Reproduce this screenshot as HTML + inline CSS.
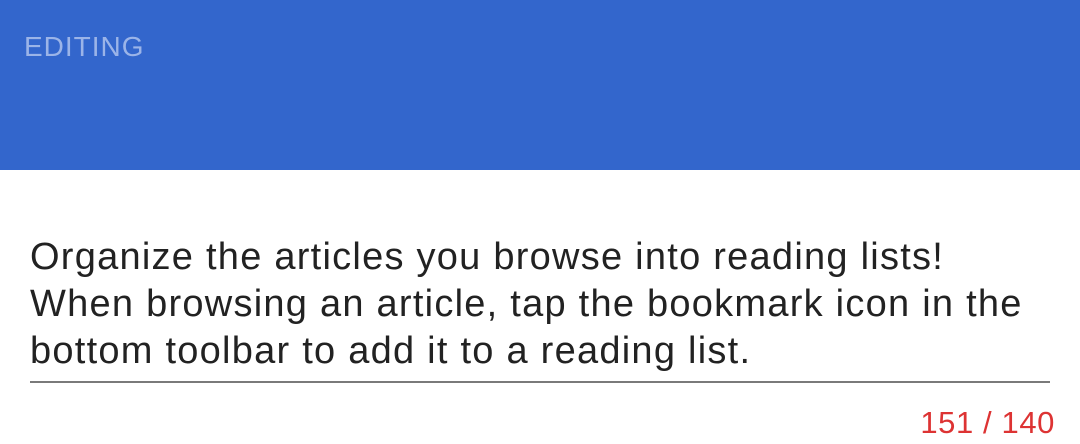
<!DOCTYPE html>
<html><head><style>
body{margin:0;width:1080px;height:444px;overflow:hidden;background:#fff;font-family:"Liberation Sans",Roboto,sans-serif;}
.h{position:absolute;left:0;top:0;width:1080px;height:170px;background:#3366cc;}
.e{position:absolute;left:24px;top:31px;font-size:28px;color:#9bb4e8;letter-spacing:1px}
.t{position:absolute;left:30px;top:234px;width:1050px;font-size:38px;line-height:47px;color:#222;letter-spacing:1.25px;white-space:nowrap}
.l{position:absolute;left:30px;top:381px;width:1020px;height:2px;background:#7a7a7a}
.c{position:absolute;right:25px;top:405px;font-size:31px;color:#d33;letter-spacing:0.6px}
</style></head><body>
<div class="h"></div><div class="e">EDITING</div>
<div class="t">Organize the articles you browse into reading lists!<br>When browsing an article, tap the bookmark icon in the<br>bottom toolbar to add it to a reading list.</div>
<div class="l"></div>
<div class="c">151 / 140</div>
</body></html>
